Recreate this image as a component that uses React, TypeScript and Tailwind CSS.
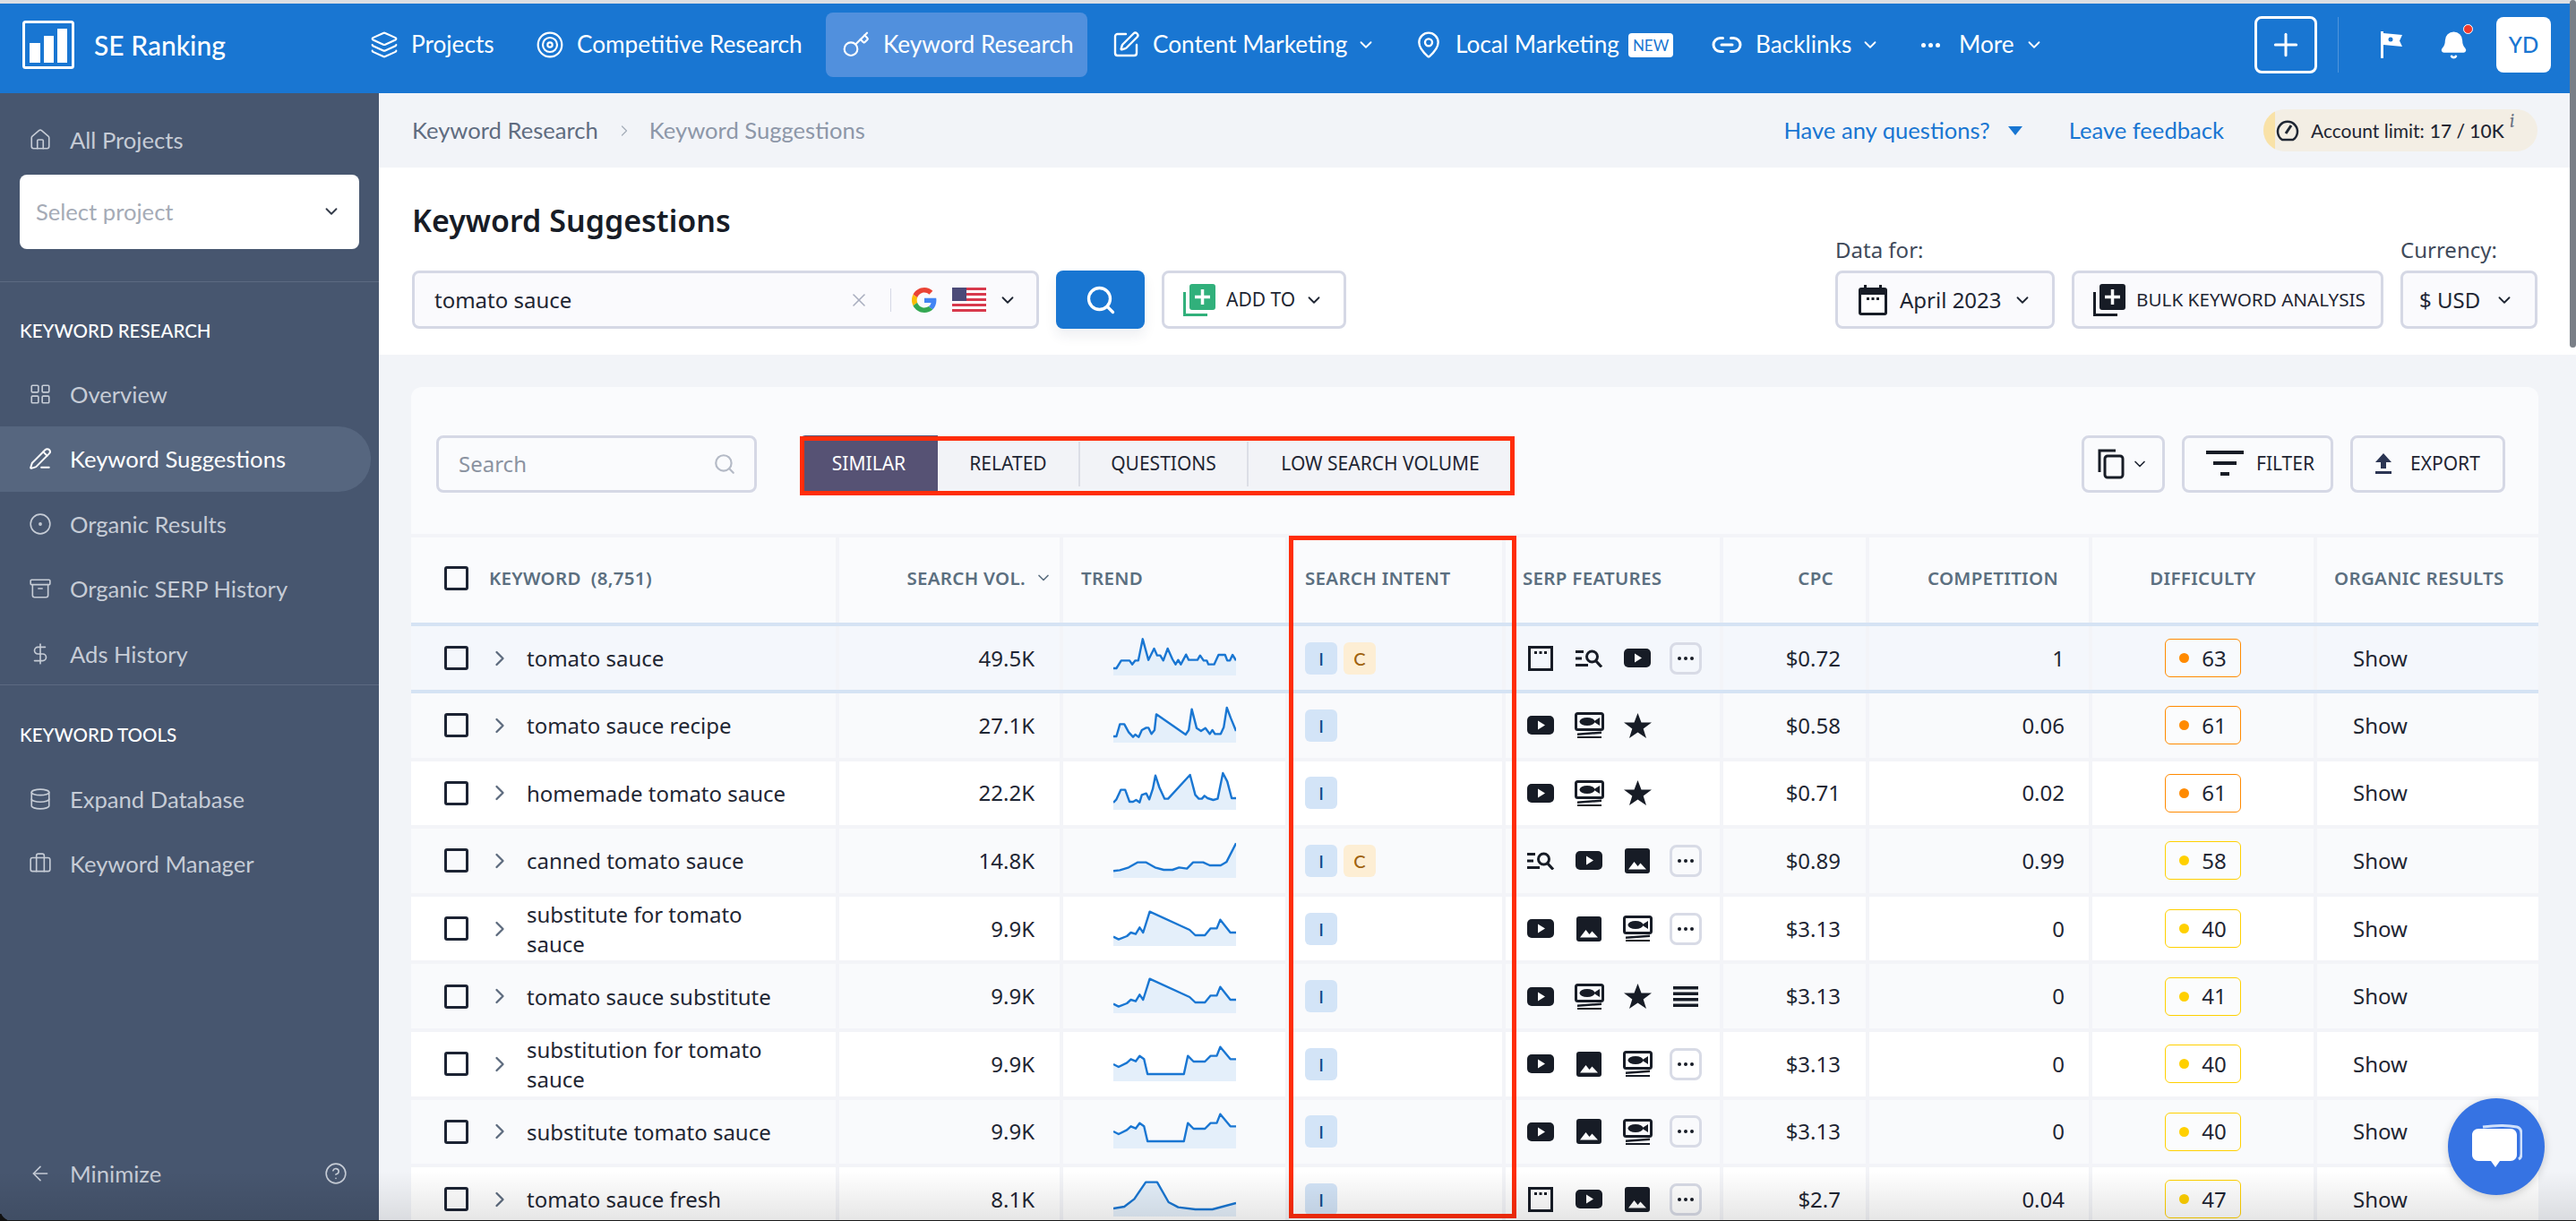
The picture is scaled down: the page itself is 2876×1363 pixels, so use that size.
import type { ReactNode } from "react";
import {
  ArrowLeft,
  Archive,
  Bell,
  Briefcase,
  ChevronDown,
  ChevronRight,
  CircleDot,
  CircleHelp,
  Database,
  DollarSign,
  House,
  Key,
  Layers,
  LayoutGrid,
  Link2,
  MapPin,
  PencilLine,
  Plus,
  Search,
  SquarePen,
  Target,
  X,
} from "lucide-react";

type SerpKind = "window" | "find" | "video" | "image" | "fish" | "star" | "lines" | "more";

type Row = {
  name: string;
  volume: string;
  intent: string[];
  serp: SerpKind[];
  cpc: string;
  comp: string;
  diff: number;
  trend: number[][];
  tone: string;
};

const hump = [[0,26],[12,35],[31,24],[40,12],[51,17],[60,-5],[68,12],[83,-58],[174,3],[187,21],[209,21],[222,-2],[236,-2],[244,-31],[267,12],[280,12]];
const gap = [[0,0],[12,9],[31,-5],[40,-17],[51,-10],[60,-28],[70,-17],[78,33],[161,33],[170,-28],[183,-9],[209,-9],[222,-28],[236,-28],[244,-58],[267,-17],[280,-17]];

const rows: Row[] = [
  {
    name: "tomato sauce", volume: "49.5K", intent: ["I", "C"], serp: ["window", "find", "video", "more"], cpc: "$0.72", comp: "1", diff: 63, tone: "bg-[#f4f7fc]",
    trend: [[0,33],[7,33],[18,7],[37,7],[43,20],[50,7],[57,7],[67,-65],[80,5],[93,-33],[100,-10],[107,-10],[114,7],[124,-33],[135,3],[142,20],[148,5],[154,20],[166,-13],[172,5],[192,5],[198,-10],[206,7],[213,7],[217,20],[230,20],[240,-12],[255,-12],[260,7],[266,7],[272,-12],[280,7]],
  },
  {
    name: "tomato sauce recipe", volume: "27.1K", intent: ["I"], serp: ["video", "fish", "star"], cpc: "$0.58", comp: "0.06", diff: 61, tone: "bg-[#f9fafc]",
    trend: [[0,36],[7,36],[15,-5],[25,-5],[35,22],[45,38],[50,30],[58,38],[65,15],[75,7],[80,7],[87,28],[94,15],[98,-38],[165,30],[172,15],[179,-55],[190,8],[200,18],[210,8],[220,28],[226,15],[232,28],[245,28],[252,5],[259,-60],[268,-25],[280,18]],
  },
  {
    name: "homemade tomato sauce", volume: "22.2K", intent: ["I"], serp: ["video", "fish", "star"], cpc: "$0.71", comp: "0.02", diff: 61, tone: "bg-white",
    trend: [[0,33],[7,22],[17,-10],[27,-10],[37,30],[45,30],[52,24],[60,32],[65,7],[75,2],[82,22],[90,-13],[96,-58],[105,-18],[117,20],[125,20],[175,-60],[187,7],[195,20],[202,20],[208,10],[215,18],[228,24],[238,20],[250,-66],[260,-38],[270,18],[280,18]],
  },
  {
    name: "canned tomato sauce", volume: "14.8K", intent: ["I", "C"], serp: ["find", "video", "image", "more"], cpc: "$0.89", comp: "0.99", diff: 58, tone: "bg-[#f9fafc]",
    trend: [[0,34],[15,31],[35,22],[55,5],[75,5],[95,22],[115,30],[135,30],[150,22],[168,26],[182,5],[205,5],[220,15],[245,15],[258,4],[280,-59]],
  },
  { name: "substitute for tomato sauce", volume: "9.9K", intent: ["I"], serp: ["video", "image", "fish", "more"], cpc: "$3.13", comp: "0", diff: 40, tone: "bg-white", trend: hump },
  { name: "tomato sauce substitute", volume: "9.9K", intent: ["I"], serp: ["video", "fish", "star", "lines"], cpc: "$3.13", comp: "0", diff: 41, tone: "bg-[#f9fafc]", trend: hump },
  { name: "substitution for tomato sauce", volume: "9.9K", intent: ["I"], serp: ["video", "image", "fish", "more"], cpc: "$3.13", comp: "0", diff: 40, tone: "bg-white", trend: gap },
  { name: "substitute tomato sauce", volume: "9.9K", intent: ["I"], serp: ["video", "image", "fish", "more"], cpc: "$3.13", comp: "0", diff: 40, tone: "bg-[#f9fafc]", trend: gap },
  {
    name: "tomato sauce fresh", volume: "8.1K", intent: ["I"], serp: ["window", "video", "image", "more"], cpc: "$2.7", comp: "0.04", diff: 47, tone: "bg-white",
    trend: [[0,30],[25,24],[48,-2],[74,-58],[100,-58],[126,9],[148,26],[187,33],[226,33],[280,12]],
  },
];

const columns = "grid grid-cols-[478px_250px_252px_242px_243px_163px_249px_251px_247px]";
const cellEdge = "border-r-4 border-[#f3f4f8] last:border-r-0";

function Sparkline({ points }: { points: number[][] }) {
  const line = points.map((p) => p.join(",")).join(" ");
  return (
    <svg width="137" height="50" viewBox="0 -75 280 150" preserveAspectRatio="none" className="block">
      <polygon points={`0,57 ${line} 280,57`} fill="#e4effa" />
      <polyline points={line} fill="none" stroke="#1976d2" strokeWidth="2.4" vectorEffect="non-scaling-stroke" strokeLinejoin="round" />
    </svg>
  );
}

function SerpIcon({ kind }: { kind: SerpKind }) {
  const dark = "#171c26";
  if (kind === "more") {
    return (
      <span className="flex h-9 w-9 items-center justify-center gap-[3px] rounded-lg border-[3px] border-[#d8dbe6]">
        <span className="h-1 w-1 rounded-full bg-[#171c26]" />
        <span className="h-1 w-1 rounded-full bg-[#171c26]" />
        <span className="h-1 w-1 rounded-full bg-[#171c26]" />
      </span>
    );
  }
  if (kind === "window") {
    return (
      <svg width="28" height="28" viewBox="0 0 28 28">
        <rect x="1.5" y="1.5" width="25" height="25" fill="none" stroke={dark} strokeWidth="3" />
        <path d="M7 6h3v3H7zM12.5 6h3v3h-3zM18 6h3v3h-3z" fill={dark} />
      </svg>
    );
  }
  if (kind === "find") {
    return (
      <svg width="31" height="20" viewBox="0 0 31 20">
        <path d="M0 1h9v3H0zM0 8.500h7v3H0zM0 16h14v3H0z" fill={dark} />
        <circle cx="18.500" cy="8" r="6" fill="none" stroke={dark} strokeWidth="3" />
        <path d="M22.500 12.500 29 19.500" stroke={dark} strokeWidth="3.200" />
      </svg>
    );
  }
  if (kind === "video") {
    return (
      <svg width="30" height="21" viewBox="0 0 30 21">
        <rect width="30" height="21" rx="5" fill={dark} />
        <path d="M12 5.500v10l8-5z" fill="#fff" />
      </svg>
    );
  }
  if (kind === "image") {
    return (
      <svg width="28" height="28" viewBox="0 0 28 28">
        <rect width="28" height="28" rx="3" fill={dark} />
        <path d="M4 23.500 10.500 15l4 5 3-3.500 6.500 7z" fill="#fff" />
      </svg>
    );
  }
  if (kind === "fish") {
    return (
      <svg width="33" height="29" viewBox="0 0 33 29">
        <rect x="1.500" y="1.500" width="30" height="18" rx="2" fill="none" stroke={dark} strokeWidth="3" />
        <ellipse cx="14" cy="10.500" rx="8.500" ry="4.500" fill={dark} />
        <path d="M21 10.500 28 6v9z" fill={dark} />
        <path d="M3 23.500 30 21.500v2.500L3 26zM3 27h27v2H3z" fill={dark} />
      </svg>
    );
  }
  if (kind === "star") {
    return (
      <svg width="31" height="28" viewBox="0 0 31 28">
        <path d="M15.500 0 19.500 10.500 31 10.500 21.700 17.500 25 28 15.500 21.500 6 28 9.300 17.500 0 10.500 11.500 10.500z" fill={dark} />
      </svg>
    );
  }
  return (
    <svg width="28" height="23" viewBox="0 0 28 23">
      <path d="M0 0h28v3.500H0zM0 6.500h28V10H0zM0 13h28v3.500H0zM0 19.500h28V23H0z" fill={dark} />
    </svg>
  );
}

function DifficultyBadge({ value }: { value: number }) {
  const orange = value > 60;
  return (
    <span className={`flex h-[43px] w-[85px] items-center justify-center gap-[13px] rounded-md border bg-white/40 pl-px ${orange ? "border-[#ff8a00]" : "border-[#ffd000]"}`}>
      <span className={`h-[11px] w-[11px] rounded-full ${orange ? "bg-[#ff8a00]" : "bg-[#ffd000]"}`} />
      <span className="w-[30px] text-center">{value}</span>
    </span>
  );
}

function Checkbox() {
  return <span className="block h-[27px] w-[27px] shrink-0 rounded-[3px] border-[3px] border-[#1c2333]" />;
}

function TableRow({ row, first }: { row: Row; first: boolean }) {
  return (
    <div className={`${columns} ${row.tone} text-[24px] text-[#1f2633] ${first ? "h-[79px] border-y-4 border-[#d5e3f4]" : "h-[75.6px] border-b-4 border-[#f3f4f8]"}`}>
      <div className={`${cellEdge} flex items-center pl-[37px]`}>
        <Checkbox />
        <ChevronRight className="ml-[21px] h-7 w-7 shrink-0 text-[#5d6b7e]" strokeWidth={2} />
        <span className="ml-[16px] w-[300px] leading-[33px]">{row.name}</span>
      </div>
      <div className={`${cellEdge} flex items-center justify-end pr-[28px]`}>{row.volume}</div>
      <div className={`${cellEdge} flex items-center justify-center`}>
        <Sparkline points={row.trend} />
      </div>
      <div className={`${cellEdge} flex items-center gap-[7px] pl-[18px]`}>
        {row.intent.map((tag) => (
          <span
            key={tag}
            className={`flex h-9 w-9 items-center justify-center rounded-md text-[20px] font-medium [font-family:Lato,sans-serif] ${tag === "I" ? "bg-[#d3e4f7] text-[#0f4c8a]" : "bg-[#fdeed4] text-[#a0620f]"}`}
          >
            {tag}
          </span>
        ))}
      </div>
      <div className={`${cellEdge} flex items-center pl-[12px]`}>
        {row.serp.map((kind, i) => (
          <span key={`${kind}-${i}`} className="flex w-[54px] items-center justify-center">
            <SerpIcon kind={kind} />
          </span>
        ))}
      </div>
      <div className={`${cellEdge} flex items-center justify-end pr-[28px]`}>{row.cpc}</div>
      <div className={`${cellEdge} flex items-center justify-end pr-[27px]`}>{row.comp}</div>
      <div className={`${cellEdge} flex items-center justify-center`}>
        <DifficultyBadge value={row.diff} />
      </div>
      <div className="flex items-center pl-[40px]">Show</div>
    </div>
  );
}

function HeaderCell({ children, className }: { children: ReactNode; className: string }) {
  return <div className={`${cellEdge} flex items-center pb-[5px] text-[20.500px] font-semibold tracking-[0.3px] text-[#5b6f80] ${className}`}>{children}</div>;
}

function NavItem({ icon, label, chevron, className = "", children }: { icon: ReactNode; label: string; chevron?: boolean; className?: string; children?: ReactNode }) {
  return (
    <div className={`flex h-[72px] shrink-0 items-center text-[26.200px] text-white ${className}`}>
      {icon}
      <span className="ml-[14px] whitespace-nowrap">{label}</span>
      {chevron && <ChevronDown className="ml-[10px] h-[22px] w-[22px]" strokeWidth={2} />}
      {children}
    </div>
  );
}

function SideItem({ icon, label, active }: { icon: ReactNode; label: string; active?: boolean }) {
  return (
    <div className={`flex h-[72.500px] w-[414px] items-center rounded-r-[36px] pl-[32px] text-[25.600px] ${active ? "bg-[#56667f] text-white" : "text-[#c6ccd6]"}`}>
      {icon}
      <span className="ml-[20px]">{label}</span>
    </div>
  );
}

function ToolButton({ children, className }: { children: ReactNode; className: string }) {
  return <div className={`flex h-[65px] items-center rounded-lg border-[3px] border-[#d5d8e5] ${className}`}>{children}</div>;
}

function PlusStack({ color }: { color: string }) {
  return (
    <svg width="36" height="36" viewBox="0 0 36 36">
      <path d="M1.500 9v25.500H27" fill="none" stroke={color} strokeWidth="3" />
      <rect x="7" y="0" width="29" height="29" rx="3" fill={color} />
      <path d="M21.500 6v17M13 14.500h17" stroke="#fff" strokeWidth="3.500" />
    </svg>
  );
}

const sideIcon = "h-[26px] w-[26px] shrink-0";

export default function App() {
  return (
    <div className="relative flex h-[1363px] w-[2876px] flex-col overflow-hidden bg-[#f2f4f8] [font-family:'Noto_Sans',sans-serif]">
      <div className="h-1 shrink-0 bg-[#dcdfe3]" />

      <header className="flex h-[100px] shrink-0 items-center bg-[#1976d2] pb-[8px] [font-family:Lato,sans-serif]">
        <svg width="58" height="54" viewBox="0 0 58 54" className="ml-[25px]">
          <rect x="1.500" y="1.500" width="55" height="51" rx="2" fill="none" stroke="#fff" strokeWidth="3" />
          <path d="M8 25h12v22H8zM24 17h11v30H24zM39 9h11v38H39z" fill="#fff" />
        </svg>
        <span className="ml-[22px] w-[190px] text-[30px] font-medium text-white">SE Ranking</span>
        <NavItem icon={<Layers className="h-8 w-8" strokeWidth={1.6} />} label="Projects" className="ml-[118px] w-[185px]" />
        <NavItem icon={<Target className="h-8 w-8" strokeWidth={1.6} />} label="Competitive Research" className="w-[324px]" />
        <NavItem icon={<Key className="h-8 w-8" strokeWidth={1.6} />} label="Keyword Research" className="w-[292px] rounded-lg bg-[#5190dd] pl-[18px]" />
        <NavItem icon={<SquarePen className="h-8 w-8" strokeWidth={1.8} />} label="Content Marketing" chevron className="ml-[27px] w-[338px]" />
        <NavItem icon={<MapPin className="h-8 w-8" strokeWidth={1.8} />} label="Local Marketing" className="w-[331px]">
          <span className="ml-[10px] rounded bg-white px-[5px] text-[17px] leading-[27px] text-[#1976d2]">NEW</span>
        </NavItem>
        <NavItem icon={<Link2 className="h-9 w-9" strokeWidth={2} />} label="Backlinks" chevron className="w-[235px]" />
        <div className="flex h-[72px] items-center gap-[21px] text-[26.200px] text-white">
          <span className="flex gap-[3px]">
            <span className="h-[5px] w-[5px] rounded-full bg-white" />
            <span className="h-[5px] w-[5px] rounded-full bg-white" />
            <span className="h-[5px] w-[5px] rounded-full bg-white" />
          </span>
          More
          <ChevronDown className="-ml-[10px] h-[22px] w-[22px]" strokeWidth={2} />
        </div>
        <div className="ml-auto flex h-16 w-[70px] items-center justify-center rounded-lg border-[3px] border-white">
          <Plus className="h-10 w-10 text-white" strokeWidth={1.8} />
        </div>
        <div className="ml-[23px] h-[62px] w-px bg-[#4f95db]" />
        <svg width="24" height="30" viewBox="0 0 24 30" className="ml-[47px]">
          <path d="M0 0h3v30H0zM3 2 24 4l-3 6.500L24 17 3 15z" fill="#fff" />
          <circle cx="11" cy="9" r="2.500" fill="#1976d2" />
        </svg>
        <div className="relative ml-[41px]">
          <Bell className="h-[33px] w-[33px] fill-white text-white" strokeWidth={2} />
          <span className="absolute -right-[5px] -top-[7px] h-[11px] w-[11px] rounded-full border border-white bg-[#f0392b]" />
        </div>
        <div className="ml-[31px] mr-[28px] flex h-[62px] w-[61px] items-center justify-center rounded-lg bg-white text-[24px] font-medium text-[#1976d2]">YD</div>
      </header>

      <div className="flex min-h-0 flex-1">
        <aside className="flex w-[423px] shrink-0 flex-col bg-[#47566f] pt-4 [font-family:Lato,sans-serif]">
          <SideItem icon={<House className={sideIcon} strokeWidth={1.5} />} label="All Projects" />
          <div className="mx-[22px] mt-[2px] flex h-[83px] items-center justify-between rounded-lg bg-white pl-[18px] pr-[20px] text-[25.600px] text-[#a5abb6]">
            Select project
            <ChevronDown className="h-[22px] w-[22px] text-[#333b49]" strokeWidth={2} />
          </div>
          <div className="mt-[36px] h-px bg-[#5c6a82]" />
          <div className="mt-[35px] flex h-[40px] items-center pl-[22px] text-[20.500px] font-medium text-white">KEYWORD RESEARCH</div>
          <div className="mt-[14px]">
            <SideItem icon={<LayoutGrid className={sideIcon} strokeWidth={1.5} />} label="Overview" />
            <SideItem icon={<PencilLine className={sideIcon} strokeWidth={1.8} />} label="Keyword Suggestions" active />
            <SideItem icon={<CircleDot className={sideIcon} strokeWidth={1.5} />} label="Organic Results" />
            <SideItem icon={<Archive className={sideIcon} strokeWidth={1.5} />} label="Organic SERP History" />
            <SideItem icon={<DollarSign className={sideIcon} strokeWidth={1.5} />} label="Ads History" />
          </div>
          <div className="-mt-[2px] h-px bg-[#5c6a82]" />
          <div className="mt-[35px] flex h-[40px] items-center pl-[22px] text-[20.500px] font-medium text-white">KEYWORD TOOLS</div>
          <div className="mt-[16px]">
            <SideItem icon={<Database className={sideIcon} strokeWidth={1.5} />} label="Expand Database" />
            <div className="-mt-[1px]">
              <SideItem icon={<Briefcase className={sideIcon} strokeWidth={1.5} />} label="Keyword Manager" />
            </div>
          </div>
          <div className="mt-auto mb-[17px] flex h-[72px] items-center pl-[32px] pr-[35px] text-[25.600px] text-[#c6ccd6]">
            <ArrowLeft className={sideIcon} strokeWidth={1.5} />
            <span className="ml-[20px]">Minimize</span>
            <CircleHelp className="ml-auto h-[26px] w-[26px]" strokeWidth={1.5} />
          </div>
        </aside>

        <main className="relative flex min-w-0 flex-1 flex-col">
          <div className="flex h-[83px] shrink-0 items-center pl-[37px] pr-[43px] text-[25.600px] [font-family:Lato,sans-serif]">
            <span className="text-[#5f6c80]">Keyword Research</span>
            <ChevronRight className="ml-[19px] h-5 w-5 text-[#a6aeba]" strokeWidth={1.5} />
            <span className="ml-[18px] text-[#8d97a8]">Keyword Suggestions</span>
            <span className="ml-auto text-[#1976d2]">Have any questions?</span>
            <span className="ml-[20px] h-0 w-0 border-x-[8px] border-t-[10px] border-x-transparent border-t-[#1976d2]" />
            <span className="ml-[52px] text-[#1976d2]">Leave feedback</span>
            <div className="ml-[44px] flex h-[47px] w-[306px] items-center overflow-hidden rounded-full bg-[#f3eee4] text-[21px] text-[#1f2633]">
              <span className="h-full w-[13px] bg-[#f9e2a8]" />
              <svg width="26" height="26" viewBox="0 0 26 26" className="ml-[1px]">
                <path d="M7 23a11 11 0 1 1 12 0z" fill="none" stroke="#1f2633" strokeWidth="2.500" />
                <path d="M11 16 17 7" stroke="#1f2633" strokeWidth="3" />
              </svg>
              <span className="ml-[13px]">Account limit:</span>
              <span className="ml-[6px] font-medium">17 / 10K</span>
              <span className="-mt-5 ml-[6px] font-serif text-[22px] italic text-[#6a7484]">i</span>
            </div>
          </div>

          <div className="flex h-[209px] shrink-0 bg-white pl-[37px] pr-[43px]">
            <div>
              <h1 className="mt-[35px] text-[34px] font-semibold leading-[48px] text-[#171c26]">Keyword Suggestions</h1>
              <div className="mt-[32px] flex items-center">
                <div className="flex h-[65px] w-[700px] items-center rounded-lg border-[3px] border-[#d5d8e5] bg-[#fafafd] pl-[22px] pr-[21px] text-[24px] text-[#1f2633]">
                  tomato sauce
                  <X className="ml-auto h-[24px] w-[24px] text-[#a9aebf]" strokeWidth={1.6} />
                  <span className="ml-[23px] h-[26px] w-px bg-[#d5d8e5]" />
                  <svg width="28" height="28" viewBox="0 0 48 48" className="ml-[23px]">
                    <path fill="#EA4335" d="M24 9.500c3.500 0 6.700 1.200 9.200 3.600l6.800-6.800C35.900 2.400 30.500 0 24 0 14.600 0 6.500 5.400 2.600 13.200l8 6.200C12.400 13.700 17.700 9.500 24 9.500z" />
                    <path fill="#4285F4" d="M47 24.500c0-1.600-.2-3.100-.4-4.500H24v9h12.900c-.6 3-2.200 5.500-4.700 7.200l7.700 6c4.500-4.200 7.100-10.300 7.100-17.700z" />
                    <path fill="#FBBC05" d="M10.500 28.600c-.5-1.500-.8-3-.8-4.600s.3-3.100.8-4.600l-8-6.200C.9 16.500 0 20.100 0 24s.9 7.500 2.600 10.800z" />
                    <path fill="#34A853" d="M24 48c6.500 0 11.900-2.100 15.900-5.800l-7.700-6c-2.200 1.400-4.900 2.300-8.200 2.300-6.300 0-11.600-4.200-13.500-9.900l-8 6.200C6.500 42.600 14.600 48 24 48z" />
                  </svg>
                  <svg width="38" height="27" viewBox="0 0 38 27" className="ml-[17px]">
                    <rect width="38" height="27" rx="2" fill="#fff" />
                    <path d="M0 0h38v3H0zM0 6h38v3H0zM0 12h38v3H0zM0 18h38v3H0zM0 24h38v3H0z" fill="#d8394c" />
                    <rect width="16" height="15" fill="#4b4a78" />
                  </svg>
                  <ChevronDown className="ml-[13px] h-[22px] w-[22px] text-[#1f2633]" strokeWidth={2} />
                </div>
                <div className="ml-[19px] flex h-[65px] w-[99px] items-center justify-center rounded-lg bg-[#1976d2] shadow-[0_8px_14px_rgba(40,50,90,0.08)]">
                  <Search className="h-9 w-9 text-white" strokeWidth={2.2} />
                </div>
                <ToolButton className="ml-[19px] w-[206px] bg-white pl-[21px] text-[21px] text-[#1f2633]">
                  <PlusStack color="#31b07b" />
                  <span className="ml-[12px]">ADD TO</span>
                  <ChevronDown className="ml-[10px] h-[22px] w-[22px]" strokeWidth={2} />
                </ToolButton>
              </div>
            </div>
            <div className="ml-auto flex items-end gap-[19px] pb-[29px]">
              <div>
                <div className="mb-[7px] text-[24px] leading-[32px] text-[#3f4a5a]">Data for:</div>
                <ToolButton className="w-[245px] bg-[#fafafd] pl-[23px] text-[24px] text-[#1f2633]">
                  <svg width="32" height="34" viewBox="0 0 32 34">
                    <rect x="0" y="3" width="32" height="31" rx="3" fill="#171c26" />
                    <path d="M6 0h3v6H6zM23 0h3v6h-3z" fill="#171c26" />
                    <rect x="3" y="11" width="26" height="20" fill="#fff" />
                    <path d="M9 14h3v3H9zM14.500 14h3v3h-3zM20 14h3v3h-3z" fill="#171c26" />
                  </svg>
                  <span className="ml-[14px]">April 2023</span>
                  <ChevronDown className="ml-[12px] h-[22px] w-[22px]" strokeWidth={2} />
                </ToolButton>
              </div>
              <ToolButton className="w-[348px] bg-[#fafafd] pl-[21px] text-[20.700px] text-[#1f2633]">
                <PlusStack color="#171c26" />
                <span className="ml-[12px] whitespace-nowrap">BULK KEYWORD ANALYSIS</span>
              </ToolButton>
              <div>
                <div className="mb-[7px] text-[24px] leading-[32px] text-[#3f4a5a]">Currency:</div>
                <ToolButton className="w-[153px] bg-[#fafafd] pl-[18px] text-[24px] text-[#1f2633]">
                  $ USD
                  <ChevronDown className="ml-[16px] h-[22px] w-[22px]" strokeWidth={2} />
                </ToolButton>
              </div>
            </div>
          </div>

          <section className="ml-[36px] mt-[36px] w-[2375px] flex-1 overflow-hidden rounded-t-xl bg-[#fafbfd]">
            <div className="flex h-[164px] items-start pl-[28px] pt-[54px] text-[21px] text-[#1f2633]">
              <div className="flex h-[64px] w-[358px] items-center rounded-lg border-[3px] border-[#d5d8e5] pl-[22px] pr-[20px] text-[24px] text-[#8b93a1]">
                Search
                <Search className="ml-auto h-[26px] w-[26px] text-[#b4bac6]" strokeWidth={2} />
              </div>
              <div className="ml-[48px] flex h-[64px] items-center overflow-hidden rounded-md bg-[#f2f3f7]">
                <span className="flex h-full w-[154px] items-center justify-center bg-[#565274] text-white">SIMILAR</span>
                <span className="flex h-full w-[157px] items-center justify-center">RELATED</span>
                <span className="h-[50px] w-[2px] bg-[#dcdee6]" />
                <span className="flex h-full w-[186px] items-center justify-center">QUESTIONS</span>
                <span className="h-[50px] w-[2px] bg-[#dcdee6]" />
                <span className="flex h-full w-[294px] items-center justify-center">LOW SEARCH VOLUME</span>
              </div>
              <div className="ml-auto flex items-center gap-[19px] pr-[37px]">
                <div className="flex h-[64px] w-[93px] items-center justify-center gap-[7px] rounded-lg border-[3px] border-[#d5d8e5]">
                  <svg width="30" height="34" viewBox="0 0 30 34">
                    <path d="M2 26V2h18" fill="none" stroke="#171c26" strokeWidth="3" />
                    <rect x="8" y="8" width="20" height="24" rx="3" fill="none" stroke="#171c26" strokeWidth="3" />
                  </svg>
                  <ChevronDown className="h-[20px] w-[20px]" strokeWidth={2} />
                </div>
                <div className="flex h-[64px] w-[169px] items-center rounded-lg border-[3px] border-[#d5d8e5] pl-[24px]">
                  <svg width="42" height="30" viewBox="0 0 42 30">
                    <path d="M0 0h42v4H0zM8 12h26v4H8zM16 24h10v4H16z" fill="#171c26" />
                  </svg>
                  <span className="ml-[14px]">FILTER</span>
                </div>
                <div className="flex h-[64px] w-[173px] items-center rounded-lg border-[3px] border-[#d5d8e5] pl-[24px]">
                  <svg width="20" height="24" viewBox="0 0 20 24">
                    <path d="M10 0 19 10H13V17H7V10H1zM1 20h18v3H1z" fill="#2b3553" />
                  </svg>
                  <span className="ml-[20px]">EXPORT</span>
                </div>
              </div>
            </div>

            <div className={`${columns} h-[99px] border-t-4 border-[#f3f4f8]`}>
              <HeaderCell className="pl-[37px]">
                <Checkbox />
                <span className="ml-[23px]">KEYWORD</span>
                <span className="ml-[11px]">(8,751)</span>
              </HeaderCell>
              <HeaderCell className="justify-end pr-[8px]">
                SEARCH VOL.
                <ChevronDown className="ml-[10px] h-[20px] w-[20px]" strokeWidth={2} />
              </HeaderCell>
              <HeaderCell className="pl-[20px]">TREND</HeaderCell>
              <HeaderCell className="pl-[18px]">SEARCH INTENT</HeaderCell>
              <HeaderCell className="pl-[19px]">SERP FEATURES</HeaderCell>
              <HeaderCell className="justify-end pr-[36px]">CPC</HeaderCell>
              <HeaderCell className="justify-end pr-[34px]">COMPETITION</HeaderCell>
              <HeaderCell className="justify-center">DIFFICULTY</HeaderCell>
              <HeaderCell className="pl-[19px]">ORGANIC RESULTS</HeaderCell>
            </div>

            {rows.map((row, i) => (
              <TableRow key={row.name} row={row} first={i === 0} />
            ))}
          </section>

          <div className="absolute -top-[104px] right-0 h-[388px] w-[7px] rounded-full bg-[#7a7f87]" />
        </main>
      </div>

      {/* annotation boxes and floating widgets over the page */}
      <div className="pointer-events-none absolute left-[893px] top-[487px] h-[66px] w-[798px] border-[5px] border-[#ff2d0a]" />
      <div className="pointer-events-none absolute left-[1439px] top-[598px] h-[762px] w-[254px] border-[5px] border-[#ff2d0a]" />

      <div className="absolute inset-x-0 bottom-0 h-[56px] bg-gradient-to-b from-transparent to-black/10" />
      <div className="absolute inset-x-0 bottom-0 h-px bg-[#1a1a1a]" />
      <div className="absolute bottom-0 left-0 h-[14px] w-[14px] rounded-bl-[14px] shadow-[-6px_6px_0_0_#111]" />

      <div className="absolute left-[2733px] top-[1226px] flex h-[108px] w-[108px] items-center justify-center rounded-full bg-[#3673e3] shadow-[0_2px_10px_rgba(0,0,0,0.18)]">
        <svg width="58" height="56" viewBox="0 0 58 56">
          <path d="M14 6c14-2 28-2 38 0 4 1 5 4 5 8v22c0 3-1 5-3 6" fill="none" stroke="#cfe0fb" strokeWidth="3" />
          <path d="M9 8h36c4 0 7 3 7 7v22c0 4-3 7-7 7H33l-5 7-5-7H9c-4 0-7-3-7-7V15c0-4 3-7 7-7z" fill="#fff" />
        </svg>
      </div>
    </div>
  );
}
